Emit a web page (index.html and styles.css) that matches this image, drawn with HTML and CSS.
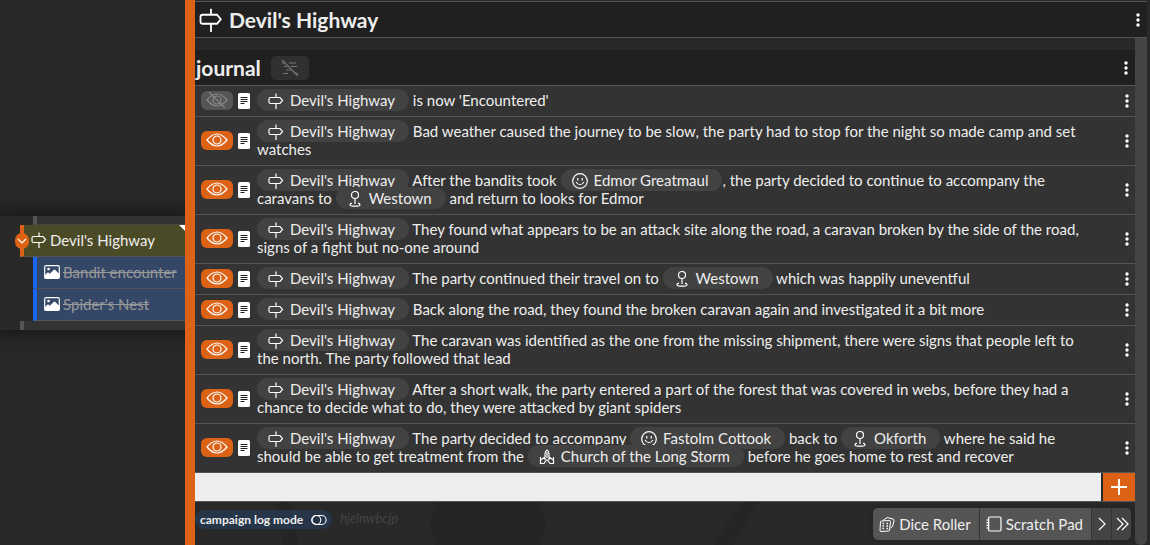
FILE: index.html
```html
<!DOCTYPE html>
<html lang="en">
<head>
<meta charset="utf-8">
<title>Devil's Highway</title>
<link rel="stylesheet" href="styles.css">
</head>
<body>
<svg class="defs" aria-hidden="true">
  <symbol id="sign" viewBox="0 0 16 16"><path d="M8 .5v4M8 10.500v5.500M2.500 4.500h9.500l2.500 3-2.500 3H2.500q-1.500 0-1.500-1.500V6q0-1.500 1.500-1.500z"/></symbol>
  <symbol id="eye" viewBox="0 0 24 16"><path d="M2 8Q7 2 12 2T22 8Q17 14 12 14T2 8z"/><circle cx="12" cy="8" r="4"/></symbol>
  <symbol id="eye-off" viewBox="0 0 24 16"><path d="M2 8Q7 2 12 2T22 8Q17 14 12 14T2 8zM4 0l16 16"/><circle cx="12" cy="8" r="4"/></symbol>
  <symbol id="doc" viewBox="0 0 12 16"><rect width="12" height="16" rx="1.500" fill="#fff" stroke="none"/><path d="M2.500 4.500h7M2.500 6.500h7M2.500 8.500h7M2.500 10.500h4" stroke="#222" stroke-width="1"/></symbol>
  <symbol id="face" viewBox="0 0 16 16"><circle cx="8" cy="8" r="7.300"/><path d="M4 9q4 5.500 8 0M5.800 5v2.500M10.200 5v2.500"/></symbol>
  <symbol id="place" viewBox="0 0 16 16"><circle cx="8" cy="4" r="3.500"/><path d="M8 7.500V13M5 12.200q-2 .5-2 1.500 0 1.500 5 1.500t5-1.500q0-1-2-1.500"/></symbol>
  <symbol id="church" viewBox="0 0 16 16"><path d="M6 11V5q0-3 2-4 2 1 2 4v6M8 3v6M6 8L1.500 11v3.500H5L7.500 11h1l2.500 3.500h3.500V11L10 8M1.500 8v3M14.500 8v3"/></symbol>
  <symbol id="image" viewBox="0 0 16 14"><rect x=".7" y=".7" width="14.600" height="12.600" rx="1.500"/><path d="M1 11l3-3 2 1.500L10.500 5 15 9.500V13H1z" fill="#fff"/><circle cx="4.500" cy="4" r="1.300" fill="#fff" stroke="none"/></symbol>
  <symbol id="dots" viewBox="0 0 4 14"><g fill="#fff" stroke="none"><circle cx="2" cy="2" r="1.700"/><circle cx="2" cy="7" r="1.700"/><circle cx="2" cy="12" r="1.700"/></g></symbol>
  <symbol id="dice" viewBox="0 0 16 16"><g stroke-width="1"><path d="M2.500 5l8-.5q1 0 1 1L10.500 14q0 1-1 1l-7.500.5q-1 0-1-1L1.500 6q0-1 1-1zM4 4.500l4-3 6 1.500q1.500.5 1 2l-1.500 5.500-2 1.500"/></g><path stroke-width="1.500" d="M3.500 7.500H5M7.500 7.500H9M3.500 10H5M7.500 10H9M3.500 12.500H5M7.500 12.500H9"/></symbol>
  <symbol id="pad" viewBox="0 0 16 16"><rect x="2.500" y="1" width="12.500" height="14" rx="1.500"/><path d="M.5 4h3M.5 6.700h3M.5 9.400h3M.5 12h3"/></symbol>
</svg>
<div class="app">
  <aside class="side">
    <nav class="tree">
      <div class="stub"></div>
      <div class="node current">
        <button class="toggle" aria-label="Collapse"><svg viewBox="0 0 14 14"><path d="M3 5l4 4 4-4"/></svg></button>
        <svg class="icon"><use href="#sign"/></svg><a href="#road">Devil's Highway</a>
      </div>
      <div class="node child"><svg class="icon"><use href="#image"/></svg><a href="#bandit">Bandit encounter</a></div>
      <div class="node child"><svg class="icon"><use href="#image"/></svg><a href="#nest">Spider's Nest</a></div>
      <div class="stub last"></div>
    </nav>
  </aside>
  <main class="main">
    <header class="title"><svg class="title-icon"><use href="#sign"/></svg><h1>Devil's Highway</h1><button class="more" aria-label="More"><svg><use href="#dots"/></svg></button></header>
    <div class="scroll">
      <section class="content">
        <header class="journal"><h2>journal</h2><button class="filter" aria-label="Filter"><svg viewBox="0 0 20 16"><path d="M2 3h4M9 3h7M4 6.500h3M11 6.500h6M6 10h5M3 13.500h5M14 13.500h4M2 0l16 16"/></svg></button><button class="more" aria-label="More"><svg><use href="#dots"/></svg></button></header>
        <ul class="log">
          <li class="row"><button class="eye off" aria-label="Hidden"><svg><use href="#eye-off"/></svg></button><svg class="doc"><use href="#doc"/></svg><p><a class="pill" href="#road"><svg><use href="#sign"/></svg>Devil's Highway</a> is now 'Encountered'</p><button class="more" aria-label="More"><svg><use href="#dots"/></svg></button></li>
          <li class="row"><button class="eye" aria-label="Visible"><svg><use href="#eye"/></svg></button><svg class="doc"><use href="#doc"/></svg><p><a class="pill" href="#road"><svg><use href="#sign"/></svg>Devil's Highway</a> Bad weather caused the journey to be slow, the party had to stop for the night so made camp and set watches</p><button class="more" aria-label="More"><svg><use href="#dots"/></svg></button></li>
          <li class="row"><button class="eye" aria-label="Visible"><svg><use href="#eye"/></svg></button><svg class="doc"><use href="#doc"/></svg><p><a class="pill" href="#road"><svg><use href="#sign"/></svg>Devil's Highway</a> After the bandits took <a class="pill" href="#edmor"><svg><use href="#face"/></svg>Edmor Greatmaul</a>, the party decided to continue to accompany the caravans to <a class="pill" href="#westown"><svg><use href="#place"/></svg>Westown</a> and return to looks for Edmor</p><button class="more" aria-label="More"><svg><use href="#dots"/></svg></button></li>
          <li class="row"><button class="eye" aria-label="Visible"><svg><use href="#eye"/></svg></button><svg class="doc"><use href="#doc"/></svg><p><a class="pill" href="#road"><svg><use href="#sign"/></svg>Devil's Highway</a> They found what appears to be an attack site along the road, a caravan broken by the side of the road, signs of a fight but no-one around</p><button class="more" aria-label="More"><svg><use href="#dots"/></svg></button></li>
          <li class="row"><button class="eye" aria-label="Visible"><svg><use href="#eye"/></svg></button><svg class="doc"><use href="#doc"/></svg><p><a class="pill" href="#road"><svg><use href="#sign"/></svg>Devil's Highway</a> The party continued their travel on to <a class="pill" href="#westown"><svg><use href="#place"/></svg>Westown</a> which was happily uneventful</p><button class="more" aria-label="More"><svg><use href="#dots"/></svg></button></li>
          <li class="row"><button class="eye" aria-label="Visible"><svg><use href="#eye"/></svg></button><svg class="doc"><use href="#doc"/></svg><p><a class="pill" href="#road"><svg><use href="#sign"/></svg>Devil's Highway</a> Back along the road, they found the broken caravan again and investigated it a bit more</p><button class="more" aria-label="More"><svg><use href="#dots"/></svg></button></li>
          <li class="row"><button class="eye" aria-label="Visible"><svg><use href="#eye"/></svg></button><svg class="doc"><use href="#doc"/></svg><p><a class="pill" href="#road"><svg><use href="#sign"/></svg>Devil's Highway</a> The caravan was identified as the one from the missing shipment, there were signs that people left to the north. The party followed that lead</p><button class="more" aria-label="More"><svg><use href="#dots"/></svg></button></li>
          <li class="row"><button class="eye" aria-label="Visible"><svg><use href="#eye"/></svg></button><svg class="doc"><use href="#doc"/></svg><p><a class="pill" href="#road"><svg><use href="#sign"/></svg>Devil's Highway</a> After a short walk, the party entered a part of the forest that was covered in webs, before they had a chance to decide what to do, they were attacked by giant spiders</p><button class="more" aria-label="More"><svg><use href="#dots"/></svg></button></li>
          <li class="row"><button class="eye" aria-label="Visible"><svg><use href="#eye"/></svg></button><svg class="doc"><use href="#doc"/></svg><p><a class="pill" href="#road"><svg><use href="#sign"/></svg>Devil's Highway</a> The party decided to accompany <a class="pill" href="#fastolm"><svg><use href="#face"/></svg>Fastolm Cottook</a> back to <a class="pill" href="#okforth"><svg><use href="#place"/></svg>Okforth</a> where he said he should be able to get treatment from the <a class="pill" href="#church"><svg><use href="#church"/></svg>Church of the Long Storm</a> before he goes home to rest and recover</p><button class="more" aria-label="More"><svg><use href="#dots"/></svg></button></li>
        </ul>
        <form class="entry"><input type="text" aria-label="New journal entry"><button type="button" aria-label="Add"><svg viewBox="0 0 16 16"><path d="M8 0v16M0 8h16"/></svg></button></form>
        <footer class="foot">
          <svg class="decor" aria-hidden="true"><path d="M81 0h15l8 46H89zM546 0h18l-28 46h-20z"/><circle cx="293" cy="22" r="57"/></svg>
          <button class="mode">campaign log mode <svg viewBox="0 0 18 12"><rect x="1" y="1" width="16" height="10" rx="5"/><circle cx="6" cy="6" r="5"/></svg></button><span class="code">hjelnwbcjp</span>
          <div class="tools">
            <button><svg><use href="#dice"/></svg>Dice Roller</button><button><svg><use href="#pad"/></svg>Scratch Pad</button><button class="arrow" aria-label="Next"><svg viewBox="0 0 10 16"><path d="M2 2l6 6-6 6"/></svg></button><button class="arrow" aria-label="Last"><svg viewBox="0 0 14 16"><path d="M2 2l6 6-6 6M7 2l6 6-6 6"/></svg></button>
          </div>
        </footer>
      </section>
      <div class="bar"></div>
    </div>
  </main>
</div>
</body>
</html>
```
FILE: styles.css
```css
* { box-sizing: border-box; }
body { margin: 0; background: #292929; color: #eee; font: 15px/18px Lato, sans-serif; overflow: hidden; }
h1, h2, p, ul { margin: 0; padding: 0; }
a { color: inherit; text-decoration: none; }
button { border: 0; padding: 0; margin: 0; color: inherit; font: inherit; background: none; display: flex; align-items: center; justify-content: center; }
svg { fill: none; stroke: #fff; stroke-width: 1.2; flex: none; }
.defs { display: none; }
.app { display: flex; height: 100vh; }
.side { width: 195px; flex: none; border-right: 10px solid #dc6216; display: flex; flex-direction: column; justify-content: center; background: #282828; }
.tree { background: #292929; box-shadow: 0 0 12px 6px #1b1b1b; clip-path: inset(-20px 0); }
.stub { height: 9px; margin-left: 33px; border-left: 4px solid #555; border-bottom: 1px solid #444; background: #333; }
.stub.last { margin-left: 20px; border-bottom: 0; }
.node { display: flex; align-items: center; gap: 3px; height: 32px; border-bottom: 1px solid #555; }
.node .icon { width: 16px; height: 16px; }
.current { position: relative; margin-left: 20px; padding-left: 7px; background: #4b4a26; border-left: 4px solid #dc6216; }
.current::after { content: ""; position: absolute; right: 0; top: 0; border: 3px solid #fff; border-left-color: transparent; border-bottom-color: transparent; }
.toggle { position: absolute; left: -9px; top: 8px; width: 14px; height: 16px; border-radius: 8px; background: #dc6216; }
.toggle svg { width: 14px; height: 14px; }
.child { margin-left: 33px; padding-left: 7px; background: #354766; border-left: 4px solid #1768ee; }
.child a { color: #999; text-decoration: line-through; }
.main { flex: 1; min-width: 0; padding: 1px 3px 0 0; display: flex; flex-direction: column; }
.title { height: 37px; flex: none; border-top: 1px solid #555; border-bottom: 1px solid #555; background: #202020; display: flex; align-items: center; padding: 0 7px 0 4px; gap: 6px; }
.title-icon { width: 24px; height: 24px; }
h1 { font-size: 21px; line-height: 28px; }
h2 { font-size: 21px; line-height: 28px; }
.more { margin-left: auto; }
.more svg { width: 4px; height: 14px; }
.scroll { flex: 1; display: flex; min-height: 0; }
.bar { width: 12px; background: #444; border-radius: 0 0 6px 6px; }
.content { flex: 1; min-width: 0; padding-top: 12px; display: flex; flex-direction: column; }
.journal { height: 36px; display: flex; align-items: center; background: #202020; border-bottom: 1px solid #555; padding: 0 7px 0 1px; gap: 10px; }
.filter { width: 38px; height: 24px; border-radius: 5px; background: #303030; }
.filter svg { width: 20px; height: 16px; stroke: #777; }
.log { list-style: none; }
.row { display: flex; align-items: center; background: #333; border-bottom: 1px solid #555; padding: 6px; }
.row p { flex: 1; min-width: 0; margin: -1px 0 1px; padding: 0 30px 0 7px; }
.eye { width: 32px; height: 19px; margin: -2px 0 0; border-radius: 6px; background: #dc6216; }
.eye svg { width: 24px; height: 16px; }
.eye.off { background: #555; }
.off svg { stroke: #888; }
.doc { width: 12px; height: 16px; margin-left: 5px; }
.pill { padding: 2px 14px 2px 11px; border-radius: 11px; background: #424242; white-space: nowrap; }
.pill svg { width: 16px; height: 16px; margin: -2px 6px -3px 0; vertical-align: baseline; }
.entry { display: flex; height: 29px; gap: 2px; border-bottom: 1px solid #555; }
.entry input { flex: 1; min-width: 0; border: 0; padding: 0 8px; background: #eee; font: inherit; }
.entry button { width: 32px; background: #dc6216; }
.entry button svg { width: 16px; height: 16px; stroke-width: 2; }
.foot { position: relative; flex: 1; display: flex; align-items: flex-start; padding: 6px 4px 0 0; overflow: hidden; }
.decor { position: absolute; z-index: -1; left: 0; top: 0; width: 100%; height: 100%; fill: #252525; stroke: none; }
.mode { height: 19px; margin-top: 2px; padding: 0 5px; gap: 8px; border-radius: 10px; background: #263648; font-size: 12px; font-weight: bold; }
.mode svg { width: 16px; height: 12px; }
.code { margin: 1px 0 0 8px; color: #444; font-size: 13px; font-style: italic; }
.tools { display: flex; margin-left: auto; height: 32px; border-radius: 5px; overflow: hidden; box-shadow: 0 0 8px #222; }
.tools button { background: #555; gap: 4px; padding: 0 8px 0 6px; border-right: 1px solid #333; }
.tools svg { width: 16px; height: 16px; }
.tools .arrow { background: #444; padding: 0; width: 20px; }
.tools .arrow:last-child { width: 19px; border: 0; }
.tools .arrow svg { width: 14px; }
```
